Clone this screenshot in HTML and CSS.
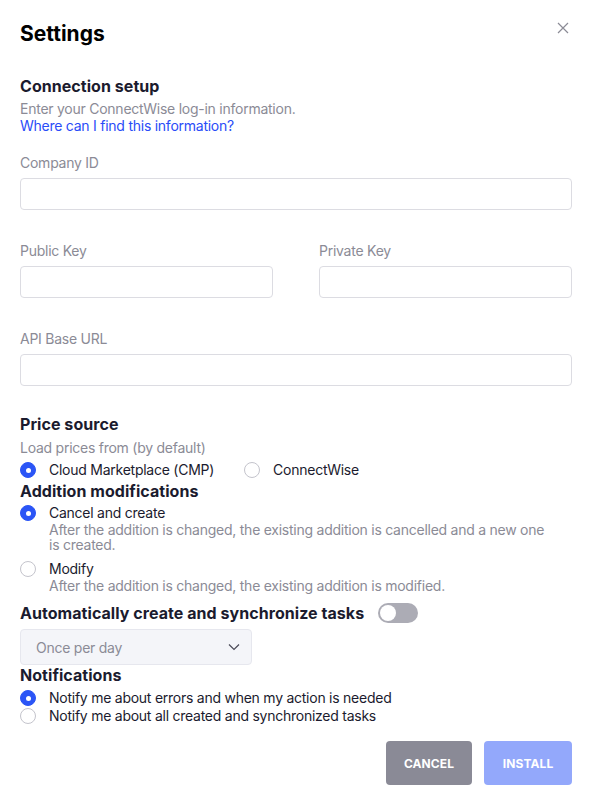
FILE: index.html
```html
<!DOCTYPE html>
<html lang="en">
<head>
<meta charset="utf-8">
<title>Settings</title>
<link rel="stylesheet" href="styles.css">
</head>
<body>
<div class="dialog">
  <header class="dialog-head">
    <h1 class="title">Settings</h1>
    <button class="close" aria-label="Close">
      <svg width="12" height="12" viewBox="0 0 12 12"><path d="M1 1L11 11M11 1L1 11" stroke="#8b8b96" stroke-width="1.2" fill="none"/></svg>
    </button>
  </header>

  <section class="conn">
    <h2 class="section-title">Connection setup</h2>
    <p class="muted desc">Enter your ConnectWise log-in information.</p>
    <a class="link" href="#">Where can I find this information?</a>

    <div class="field first">
      <label class="label">Company ID</label>
      <div class="input"></div>
    </div>
    <div class="row2">
      <div class="field">
        <label class="label">Public Key</label>
        <div class="input"></div>
      </div>
      <div class="field">
        <label class="label">Private Key</label>
        <div class="input"></div>
      </div>
    </div>
    <div class="field">
      <label class="label">API Base URL</label>
      <div class="input"></div>
    </div>
  </section>

  <section class="price">
    <h2 class="section-title">Price source</h2>
    <p class="muted load">Load prices from (by default)</p>
    <div class="radio-row">
      <div class="opt"><span class="radio on"></span><span class="opt-label">Cloud Marketplace (CMP)</span></div>
      <div class="opt"><span class="radio"></span><span class="opt-label">ConnectWise</span></div>
    </div>
  </section>

  <section class="addition">
    <h2 class="section-title">Addition modifications</h2>
    <div class="opt-block">
      <div class="opt"><span class="radio on"></span><span class="opt-label">Cancel and create</span></div>
      <p class="muted opt-desc">After the addition is changed, the existing addition is cancelled and a new one is created.</p>
    </div>
    <div class="opt-block second">
      <div class="opt"><span class="radio"></span><span class="opt-label">Modify</span></div>
      <p class="muted opt-desc">After the addition is changed, the existing addition is modified.</p>
    </div>
  </section>

  <section class="auto">
    <div class="auto-head">
      <h2 class="section-title">Automatically create and synchronize tasks</h2>
      <span class="toggle"><span class="knob"></span></span>
    </div>
    <div class="select">
      <span>Once per day</span>
      <svg width="12" height="8" viewBox="0 0 12 8"><path d="M1 1.5L6 6.5L11 1.5" stroke="#4a4a58" stroke-width="1.2" fill="none"/></svg>
    </div>
  </section>

  <section class="notif">
    <h2 class="section-title">Notifications</h2>
    <div class="opt"><span class="radio on"></span><span class="opt-label">Notify me about errors and when my action is needed</span></div>
    <div class="opt"><span class="radio"></span><span class="opt-label">Notify me about all created and synchronized tasks</span></div>
  </section>

  <footer class="actions">
    <button class="btn cancel">CANCEL</button>
    <button class="btn install">INSTALL</button>
  </footer>
</div>
</body>
</html>
```

FILE: styles.css
```css
* { box-sizing: border-box; }
html, body { margin: 0; padding: 0; background: #fff; }
body {
  font-family: Inter, "Noto Sans", "Liberation Sans", sans-serif;
  color: #1b1b2e;
}
.dialog {
  width: 594px;
  padding: 20px 22px 0 20px;
}
.dialog-head {
  display: flex;
  justify-content: space-between;
  align-items: flex-start;
}
.title {
  margin: 0;
  font-size: 21px;
  line-height: 28px;
  font-weight: 700;
  color: #000;
  letter-spacing: 0;
}
.close {
  border: 0;
  background: none;
  padding: 0;
  margin: 2px 3px 0 0;
  width: 12px;
  height: 12px;
  display: flex;
}
.section-title {
  margin: 0;
  font-size: 16px;
  line-height: 20px;
  font-weight: 700;
  color: #1b1b2e;
  letter-spacing: 0.05px;
}
.muted {
  color: #8b8b96;
}
p { margin: 0; }
.conn { margin-top: 28px; }
.desc, .link, .label, .load, .opt, .opt-desc, .select {
  letter-spacing: -0.25px;
}
.desc {
  margin-top: 4px;
  font-size: 14px;
  line-height: 17px;
}
.link {
  display: block;
  font-size: 14px;
  line-height: 17px;
  color: #2a4cf8;
  text-decoration: none;
}
.field { margin-top: 32px; display: flex; flex-direction: column; }
.field.first { margin-top: 20px; }
.label {
  font-size: 14px;
  line-height: 17px;
  color: #8b8b96;
}
.input {
  margin-top: 7px;
  height: 32px;
  border: 1px solid #dcdce2;
  border-radius: 4px;
  background: #fff;
}
.row2 {
  display: grid;
  grid-template-columns: 1fr 1fr;
  column-gap: 46px;
}
.price { margin-top: 28px; }
.load {
  margin-top: 5px;
  font-size: 14px;
  line-height: 17px;
}
.radio-row {
  display: flex;
  gap: 30px;
  margin-top: 5px;
}
.opt {
  display: flex;
  align-items: center;
  gap: 13px;
  font-size: 14px;
  line-height: 18px;
  color: #1b1b2e;
}
.radio {
  width: 16px;
  height: 16px;
  border-radius: 50%;
  border: 1px solid #c4c4cc;
  background: #fff;
  flex: none;
  position: relative;
}
.radio.on {
  background: #2b55f6;
  border-color: #2b55f6;
}
.radio.on::after {
  content: "";
  position: absolute;
  left: 50%;
  top: 50%;
  width: 5px;
  height: 5px;
  margin: -2.5px 0 0 -2.5px;
  border-radius: 50%;
  background: #fff;
}
.addition { margin-top: 2px; }
.opt-block { margin-top: 3px; }
.opt-block.second { margin-top: 8px; }
.opt-desc {
  padding-left: 29px;
  font-size: 14px;
  line-height: 15px;
  width: 560px;
  padding-right: 30px;
}
.auto { margin-top: 10px; }
.auto-head {
  display: flex;
  align-items: center;
  gap: 14px;
}
.toggle {
  width: 40px;
  height: 20px;
  border-radius: 10px;
  background: #acacb5;
  display: flex;
  align-items: center;
  padding: 0 2px;
}
.knob {
  width: 16px;
  height: 16px;
  border-radius: 50%;
  background: #fff;
}
.select {
  margin-top: 6px;
  width: 232px;
  height: 36px;
  border: 1px solid #e6e7ee;
  border-radius: 4px;
  background: #f4f5f9;
  display: flex;
  align-items: center;
  justify-content: space-between;
  padding: 0 11px 0 15px;
  font-size: 14px;
  color: #8b8b96;
}
.notif { margin-top: 0; }
.notif .opt:first-of-type { margin-top: 4px; }
.actions {
  display: flex;
  justify-content: flex-end;
  gap: 12px;
  margin-top: 16px;
}
.btn {
  height: 44px;
  border: 0;
  border-radius: 4px;
  color: #fff;
  font-family: Inter, "Liberation Sans", sans-serif;
  font-size: 12px;
  font-weight: 700;
  letter-spacing: 0.1px;
}
.cancel { width: 86px; background: #8a8a96; }
.install { width: 88px; background: #93a8fb; }
```
